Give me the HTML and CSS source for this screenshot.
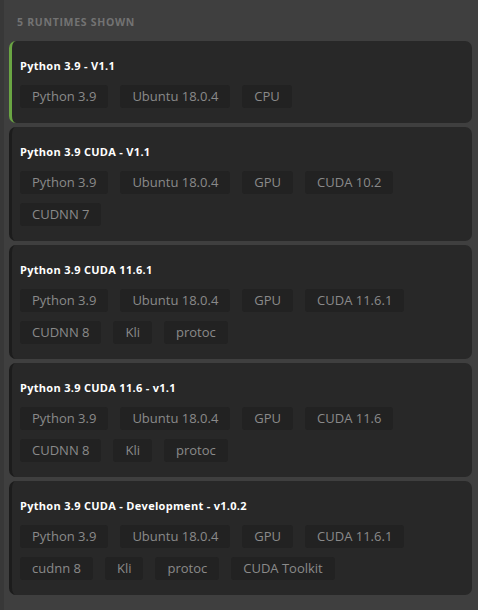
FILE: index.html
```html
<!DOCTYPE html>
<html>
<head>
<meta charset="utf-8">
<link rel="stylesheet" href="styles.css">
</head>
<body>
<div class="panel">
  <div class="heading">5 Runtimes shown</div>
  <div class="list">
    <div class="card active">
      <div class="title">Python 3.9 - V1.1</div>
      <div class="tags">
        <span class="tag">Python 3.9</span><span class="tag">Ubuntu 18.0.4</span><span class="tag">CPU</span>
      </div>
    </div>
    <div class="card">
      <div class="title">Python 3.9 CUDA - V1.1</div>
      <div class="tags">
        <span class="tag">Python 3.9</span><span class="tag">Ubuntu 18.0.4</span><span class="tag">GPU</span><span class="tag">CUDA 10.2</span><span class="tag">CUDNN 7</span>
      </div>
    </div>
    <div class="card">
      <div class="title">Python 3.9 CUDA 11.6.1</div>
      <div class="tags">
        <span class="tag">Python 3.9</span><span class="tag">Ubuntu 18.0.4</span><span class="tag">GPU</span><span class="tag">CUDA 11.6.1</span><span class="tag">CUDNN 8</span><span class="tag">Kli</span><span class="tag">protoc</span>
      </div>
    </div>
    <div class="card">
      <div class="title">Python 3.9 CUDA 11.6 - v1.1</div>
      <div class="tags">
        <span class="tag">Python 3.9</span><span class="tag">Ubuntu 18.0.4</span><span class="tag">GPU</span><span class="tag">CUDA 11.6</span><span class="tag">CUDNN 8</span><span class="tag">Kli</span><span class="tag">protoc</span>
      </div>
    </div>
    <div class="card">
      <div class="title">Python 3.9 CUDA - Development - v1.0.2</div>
      <div class="tags">
        <span class="tag">Python 3.9</span><span class="tag">Ubuntu 18.0.4</span><span class="tag">GPU</span><span class="tag">CUDA 11.6.1</span><span class="tag">cudnn 8</span><span class="tag">Kli</span><span class="tag">protoc</span><span class="tag">CUDA Toolkit</span>
      </div>
    </div>
  </div>
</div>
</body>
</html>
```

FILE: styles.css
```css
* { box-sizing: border-box; }
html, body { margin: 0; padding: 0; }
body {
  background: #3f3f3f;
  font-family: "Open Sans", "DejaVu Sans", sans-serif;
  width: 478px;
  height: 610px;
  overflow: hidden;
}
.panel {
  height: 610px;
  border-left: 4px solid #383838;
  padding: 14px 6px 0 5px;
}
.heading {
  font-size: 10.5px;
  font-weight: 700;
  color: #737373;
  text-transform: uppercase;
  letter-spacing: 0.7px;
  padding-left: 8px;
  height: 27px;
  line-height: 16px;
}
.list {
  display: flex;
  flex-direction: column;
  gap: 4px;
}
.card {
  background: #282828;
  border-radius: 7px;
  border-left: 3px solid #1c1c1c;
  padding: 18px 12px 15px 8px;
}
.card.active { border-left-color: #6aa543; }
.title {
  color: #ffffff;
  font-size: 11px;
  font-weight: 700;
  letter-spacing: 0.3px;
  line-height: 14px;
  margin-bottom: 12px;
}
.tags {
  display: flex;
  flex-wrap: wrap;
  column-gap: 12px;
  row-gap: 9px;
}
.tag {
  background: #222222;
  color: #8a8a8a;
  font-size: 13px;
  line-height: 23px;
  height: 23px;
  padding: 0 12px;
  border-radius: 3px;
}
```
